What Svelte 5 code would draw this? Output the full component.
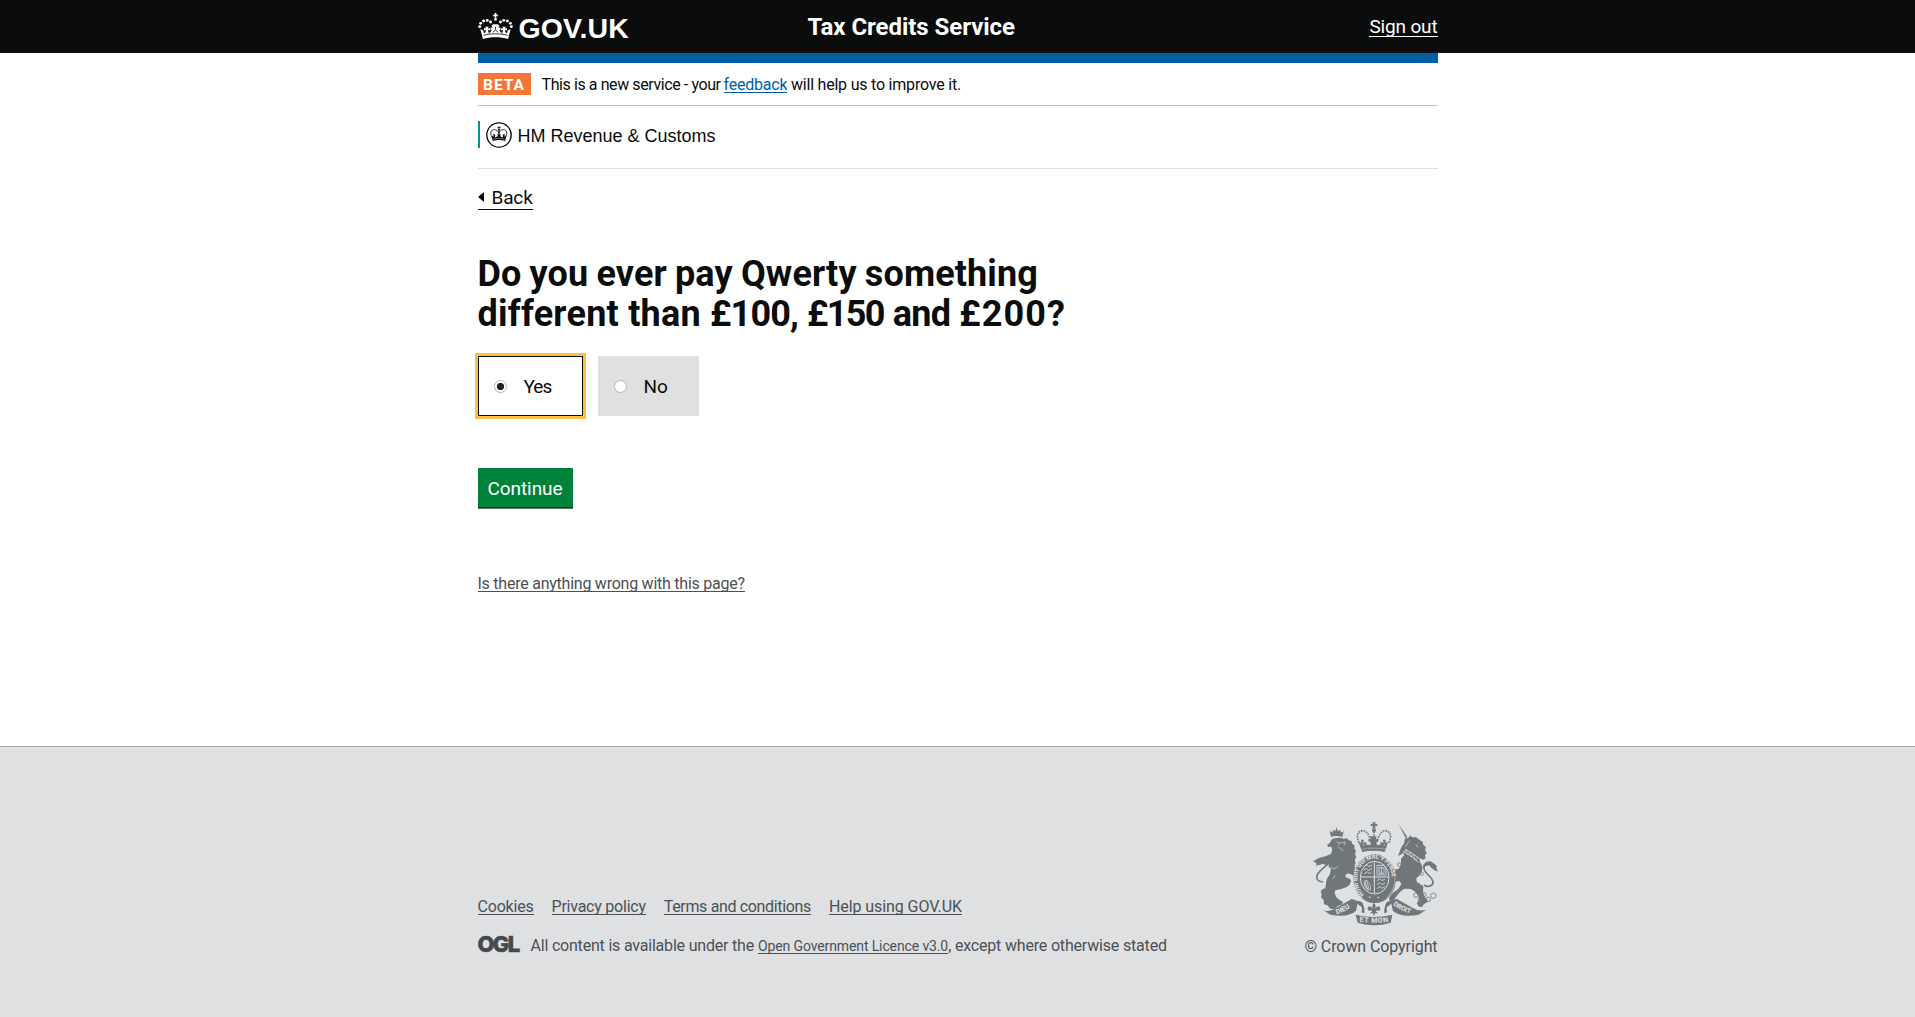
<script>
  let choice = $state('yes');
  const footerLinks = [
    { label: 'Cookies', cls: 'cookies' },
    { label: 'Privacy policy', cls: 'privacy' },
    { label: 'Terms and conditions', cls: 'terms' },
    { label: 'Help using GOV.UK', cls: 'help' }
  ];
  const sidePearls = [[29, 79], [32, 69], [41, 62], [52, 60], [62, 65]];
</script>

<header class="masthead">
  <div class="wrap masthead-row">
    <a class="logo" href="#home">
      <svg class="crown" viewBox="24 38 106 78" aria-hidden="true">
        <g fill="#fff">
          <path d="M74 38h6l-1 5 5-1v6l-5-1 1 5h-6l1-5-5 1v-6l5 1z" />
          <circle cx="77" cy="57" r="4.2" />
          {#each sidePearls as [x, y]}
            <circle cx={x} cy={y} r="4.4" />
            <circle cx={154 - x} cy={y} r="4.4" />
          {/each}
          <path d="M31 86l9 5 2 8 5-3 1-7-6 2v-8l6 2-2-6h10l-2 6 6-2v8l-6-2 2 8c5-1 8-4 10-9l-4 2v-9l6 3-3-8 5-4h14l5 4-3 8 6-3v9l-4-2c2 5 5 8 10 9l2-8-6 2v-8l6 2-2-6h10l-2 6 6-2v8l-6-2 1 7 5 3 2-8 9-5-8 30c-23-7-53-7-76 0z" />
        </g>
        <path d="M40 105c23-6 51-6 74 0M69 96l8-7 8 7M77 80v8M56 99l5-3M98 99l-5-3" fill="none" stroke="#0b0c0c" stroke-width="2.4" />
      </svg>
      <span>GOV.UK</span>
    </a>
    <span class="service">Tax Credits Service</span>
    <a class="signout" href="#signout">Sign out</a>
  </div>
</header>

<main class="wrap">
  <div class="phase">
    <strong>BETA</strong>
    <span class="phase-a">This is a new service - your</span>
    <a class="clip feedback" href="#feedback">feedback</a>
    <span class="phase-b">will help us to improve it.</span>
  </div>

  <div class="org">
    <div class="org-inner">
      <svg viewBox="48 65 79 79" aria-hidden="true">
        <circle cx="87.500" cy="104.500" r="37" fill="#fff" stroke="#0b0c0c" stroke-width="4" />
        <g fill="none" stroke="#0b0c0c" stroke-width="2.500">
          <path d="M68 115c-10-16-5-27 5-27 7 0 12 5 14 12 2-7 7-12 14-12 10 0 14 11 5 27M87.500 78v24M82 82h11" />
          <circle cx="87.500" cy="89" r="2.500" />
        </g>
        <path d="M66 106l5 4-1-9 6 3-1 8 9-4-2-6h11l-2 6 9 4-1-8 6-3-1 9 5-4-2 17c-12-4-27-4-39 0z" fill="#0b0c0c" />
        <path d="M70 117c11-3 24-3 35 0" fill="none" stroke="#bbb" stroke-width="1.500" />
      </svg>
      <span>HM Revenue &amp; Customs</span>
    </div>
  </div>

  <a class="back" href="#back"><i></i><span>Back</span></a>

  <h1>
    <span class="line line-a">Do you ever pay Qwerty something</span>
    <span class="line">
      <span class="seg-a">different than</span>
      <span class="seg-b">£100,</span>
      <span class="seg-c">£150</span>
      <span class="seg-d">and</span>
      <span class="seg-e">£200?</span>
    </span>
  </h1>

  <div class="options" role="radiogroup">
    <button class="option yes" class:selected={choice === 'yes'} role="radio" aria-checked={choice === 'yes'} onclick={() => (choice = 'yes')}>
      <i class="dot"></i><span>Yes</span>
    </button>
    <button class="option no" class:selected={choice === 'no'} role="radio" aria-checked={choice === 'no'} onclick={() => (choice = 'no')}>
      <i class="dot"></i><span>No</span>
    </button>
  </div>

  <button class="continue">Continue</button>

  <div class="report"><a class="clip" href="#report">Is there anything wrong with this page?</a></div>
</main>

<footer>
  <div class="wrap footer-row">
    <div class="meta">
      <nav>
        {#each footerLinks as link}
          <a class="clip {link.cls}" href="#{link.cls}">{link.label}</a>
        {/each}
      </nav>
      <div class="licence">
        <svg class="ogl" viewBox="0 0 43 18" aria-hidden="true">
          <text x="-0.500" y="16.500">OGL</text>
        </svg>
        <span class="lic-a">All content is available under the</span>
        <a class="clip lic-link" href="#licence">Open Government Licence v3.0</a>
        <span class="lic-b">, except where otherwise stated</span>
      </div>
    </div>
    <div class="copyright">
      <svg viewBox="69 35 375 312" aria-hidden="true">
        <defs>
          <path id="motto" d="M222 252A52 60 0 1 1 286 252" />
          <path id="dieu" d="M140 312Q165 304 192 284" />
          <path id="mon" d="M208 333Q252 342 301 333" />
          <path id="droit" d="M309 284Q335 304 374 313" />
        </defs>
        <g fill="#6f777b">
          <!-- central crown -->
          <path d="M247 36h10l-2 6 7-2v8l-7-2 2 8h-10l2-8-7 2v-8l7 2z" />
          <circle cx="252" cy="60" r="6" />
          <path d="M209 105l-3-10 8 3-1-10h8l-1 10 8-4 2 9 12 0-1-11-6 2v-8l8 1-3-9h20l-3 9 8-1v8l-6-2-1 11h12l2-9 8 4-1-10h8l-1 10 8-3-3 10-7 20q-34-8-67 0z" />
          <!-- lion -->
          <path d="M123 79l-4-17 9 5 1-9 7 5 3-12 5 12 7-5 2 9 8-4-4 17q-18-5-34-1z" />
          <path d="M121 96q2-10 13-12l16-2 12 3 9-1 5 6 9 2 1 8 8 5-1 9 5 8-3 9 4 9-5 8 3 9-3 8 1 12q8 6 10 15-2 10-10 10l-9-9-11-4-9 4 2 9q13 0 15 10-2 12-13 18l-16 6-18 4-2 8 5 13 11 9 9 5-3 7-13 5-9 9-13-1-9-10-10-3-1-13-8-8 2-8-3-10q5-9 14-9l3-22q2-10 10-19l4-17-7-6 0-11-9 5-10-4-9 5-5-9 9-5 3-9q16-6 28-11l4-12-3-10-9 1-4-6 7-5z" />
          <path d="M69 154q9-8 17-10 9-6 21-4l-3 5-7 3q-2 14-19 18 5-10-9-12z" />
          <!-- unicorn -->
          <path d="M326 42l26 38-5 4z" />
          <path d="M333 113l10-16 1-12 12-3 5-7 5 6 13 0 10 8 9 5 2 10 8 7-3 8 5 9-5 7 2 9-7 4-12-4 3 13 7 12-3 16-7 11-9 8 1 10 20 14-1 18 6 16 8 6-2 8-9 5-6 9-9-1-7-10 8-10-3-13-11-13-12-7-19-1-11 8-12 14-9 14-11 5-3-12 8-14 20-14 9-15-5-9-17 3-10 13-9-3 4-8-8-5 5-9 18-7-11-11-15-4-2 9-10-9 8-12 11 0 15 9 17-1 8-13 0-18 9-11-1-7-17 9z" />
          <path d="M399 167q4-15 23-14l18 13-1 8 5 10q-13-4-20-12l-6-7-9 2z" />
          <!-- garter -->
          <ellipse cx="254" cy="205" rx="64" ry="73" />
        </g>
        <path d="M196 274q-4 18 7 24l-7 9 10 30h92l9-30-7-9q11-8 7-24-25 8-53 4-30 4-58-4z" fill="#dee0e2" />
        <g fill="#6f777b">
          <!-- ribbons -->
          <path d="M99 298q17 10 40-6l46-26 19 6-6 30q-25 21-77 11l-8-5z" />
          <path d="M409 298q-19 7-42-6l-46-26-19 6 7 30q25 21 77 11l8-5z" />
        </g>
        <g fill="none" stroke="#6f777b" stroke-width="5">
          <path d="M247 105q-12-45-29-44-24 4-11 37M257 105q12-45 29-44 24 4 11 37" stroke-dasharray="5 3" />
          <path d="M252 65v37" stroke-dasharray="4 3" />
          <path d="M108 143q20 3 2 22-23 17-29 30-5 18 18 20M404 164q-7 13 8 27 28 26 10 35-10 5-20-2" />
        </g>
        <g fill="none" stroke="#dee0e2">
          <ellipse cx="254" cy="205" rx="61" ry="70" stroke-width="1.500" />
          <ellipse cx="254" cy="202" rx="43" ry="49" stroke-width="3" />
          <path d="M253 156v92M213 200h83" stroke-width="3" />
          <path d="M140 94l9 4-5 7M151 98l15-3-4 9M145 110q11 5 13 12M121 170q12 10 23-2M127 205l10-9" stroke-width="2" />
          <path d="M359 91l-13 18M377 102l7 9" stroke-width="2" />
          <path d="M340 123q24 13 46 33M345 117q24 12 45 29" stroke-width="2.500" />
          <path d="M340 128l9-11 3 16 9-8 2 15 9-6 2 15 9-5" stroke-width="2" />
          <path d="M209 118q43-9 86 0" stroke-width="2" stroke-dasharray="5 3" />
          <path d="M232 103l5-7 5 7M262 103l5-7 5 7M223 107l-4-6M281 107l4-6" stroke-width="2" />
          <path d="M222 169l10-6 5 6 9-5M221 179l8-4 6 5 11-6M223 190l9-6 6 6 7-5M261 211l9-6 6 6 9-5M261 223l9-6 6 6 9-5M261 235l9-6 6 5 8-5" stroke-width="2.500" />
          <path d="M261 165h21l6 10v19h-27zM267 171v18h15v-16zM274 170v21" stroke-width="2.500" />
          <path d="M224 211q19 0 18 29M224 211l10 27M230 209l8 32M222 216l10 21M224 211q-5 17 12 29" stroke-width="2" />
        </g>
        <g fill="#6f777b">
          <path d="M213 251q41 34 83 0l-9 17q-34 19-65 0z" />
          <path d="M196 274q14-6 22 4 7 19 5 31l-9-3q6-18-5-20zM310 274q-14-6-22 4-7 19-5 31l9-3q-6-18 5-20z" />
          <path d="M252 277q8 9 3 20 8-15 16-5 1 12-11 8l-3 5h5v4h-7l-3 9-3-9h-7v-4h5l-3-5q-12 4-11-8 8-10 16 5-5-11 3-20z" />
          <path d="M197 313q55 14 110 0l-5 24q-49 15-99 0z" />
        </g>
        <g fill="#dee0e2">
          <circle cx="239" cy="261" r="2.500" /><circle cx="265" cy="261" r="2.500" />
        </g>
        <g fill="none" stroke="#6f777b" stroke-width="2.500">
          <circle cx="378" cy="254" r="7" /><circle cx="390" cy="268" r="6" /><circle cx="414" cy="267" r="7" /><circle cx="430" cy="256" r="8" />
          <circle cx="402" cy="253" r="6" /><circle cx="328" cy="163" r="5" /><circle cx="326" cy="184" r="7" /><circle cx="395" cy="190" r="5" />
        </g>
        <g class="mottoes">
          <text font-size="17"><textPath href="#motto">HONI SOIT QUI MAL Y PENSE</textPath></text>
          <text font-size="21"><textPath href="#dieu">DIEU</textPath></text>
          <text font-size="21" letter-spacing="2"><textPath href="#mon">ET MON</textPath></text>
          <text font-size="20"><textPath href="#droit">DROIT</textPath></text>
        </g>
      </svg>
      <span>© Crown Copyright</span>
    </div>
  </div>
</footer>

<style>
  :global(body) { background: #fff; color: #0b0c0c; }
  :global(#app) { display: flex; flex-direction: column; min-height: 100vh; font: 16px/21px Roboto, sans-serif; }
  a { color: inherit; text-decoration: none; }
  button { font: inherit; border: 0; border-radius: 0; padding: 0; color: inherit; cursor: pointer; }
  .wrap { width: 960px; margin: 0 auto; box-sizing: border-box; }
  .clip { display: block; height: 18px; overflow: hidden; border-bottom: 1px solid currentColor; white-space: nowrap; }

  .masthead { height: 53px; background: #0b0c0c; color: #fff; }
  .masthead-row { display: flex; align-items: flex-start; }
  .logo { display: flex; width: 330px; height: 53px; font: bold 28.5px/32px "Liberation Sans", sans-serif; letter-spacing: 0.1px; }
  .logo span { margin: 12px 0 0 6px; }
  .crown { width: 35px; height: 26px; margin-top: 13px; }
  .service { flex: 1; margin-top: 12px; font-size: 24px; font-weight: bold; line-height: 30px; letter-spacing: -0.05px; }
  .signout { display: block; margin-top: 13px; height: 23px; font-size: 19px; line-height: 27px; letter-spacing: -0.16px; border-bottom: 1px solid #fff; }

  main { border-top: 10px solid #005ea5; }
  .phase { display: flex; align-items: flex-start; height: 43px; padding-top: 11px; box-sizing: border-box; border-bottom: 1px solid #bfc1c3; white-space: nowrap; }
  .phase strong { width: 53px; height: 22px; margin: -1px 11px 0 0; background: #f47738; color: #fff; font-size: 15.5px; line-height: 24px; letter-spacing: 1px; text-align: center; }
  .phase-a { width: 182px; letter-spacing: -0.41px; }
  .feedback { color: #005ea5; letter-spacing: -0.2px; }
  .phase-b { margin-left: 3.5px; letter-spacing: -0.21px; }

  .org { padding: 15px 0 20px; border-bottom: 1px solid #dee0e2; }
  .org-inner { display: flex; align-items: center; height: 27px; border-left: 2px solid #009390; }
  .org svg { width: 26px; height: 26px; margin: 0 6px; }
  .org span { font: 18px/27px "Liberation Sans", sans-serif; letter-spacing: -0.01px; padding-top: 3px; }

  .back { display: flex; align-items: flex-start; width: 55px; height: 25px; margin-top: 15px; border-bottom: 1px solid #0b0c0c; font-size: 19px; line-height: 27px; letter-spacing: -0.15px; }
  .back i { width: 0; height: 0; margin: 8px 8px 0 0; border: 5px solid transparent; border-left: 0; border-right: 6px solid #0b0c0c; }

  h1 { margin: 44px 0 0; font-size: 36px; line-height: 40px; }
  .line { display: block; white-space: nowrap; }
  .line-a { letter-spacing: 0.12px; word-spacing: -0.9px; }
  .seg-a { letter-spacing: 0.25px; }
  .seg-b { letter-spacing: -0.8px; }
  .seg-c { letter-spacing: -1.7px; }
  .seg-d { letter-spacing: -0.7px; }
  .seg-e { letter-spacing: 1.1px; }

  .options { display: flex; gap: 15px; margin-top: 22px; }
  .option { display: flex; align-items: center; height: 60px; background: #dee0e2; font-size: 19px; }
  .option span { padding-top: 1px; }
  .yes { width: 105px; padding-left: 16px; letter-spacing: -1px; }
  .no { width: 101px; padding-left: 16px; letter-spacing: 0; }
  .selected { background: #fff; box-shadow: inset 0 0 0 1px #0b0c0c; outline: 3px solid #ffbf47; }
  .dot { display: block; box-sizing: border-box; width: 13px; height: 13px; margin-right: 17px; border: 1px solid #b5b5b5; border-radius: 50%; background: #fff; }
  .selected .dot { background: radial-gradient(circle, #222 3.3px, #fff 4px); }

  .continue { display: block; width: 95px; height: 39px; margin-top: 52px; background: #00823b; color: #fff; font-size: 19px; line-height: 22px; padding-top: 2px; letter-spacing: -0.07px; box-shadow: 0 1px 0 #003618, 0 2px 0 #59806b; }
  .report { display: flex; margin-top: 66px; height: 173px; color: #4c5054; letter-spacing: -0.24px; }

  footer { flex: 1; border-top: 1px solid #a1acb2; background: #dee0e2; color: #4c5054; }
  .footer-row { display: flex; justify-content: space-between; padding-top: 75px; }
  .meta { padding-top: 74px; }
  nav { display: flex; gap: 18px; }
  .cookies { letter-spacing: -0.2px; }
  .privacy { letter-spacing: -0.23px; }
  .terms { letter-spacing: -0.35px; }
  .help { letter-spacing: -0.07px; }
  .licence { display: flex; margin-top: 20px; white-space: nowrap; }
  .ogl { width: 43px; height: 18px; margin-right: 10px; overflow: visible; }
  .ogl text { font: 800 22px Inter, sans-serif; letter-spacing: -1.7px; fill: #45494c; stroke: #45494c; stroke-width: 0.6; }
  .lic-a { width: 227.5px; letter-spacing: -0.2px; }
  .lic-link { font-size: 14px; letter-spacing: -0.12px; line-height: 22px; }
  .lic-b { letter-spacing: -0.18px; }
  .copyright { display: flex; flex-direction: column; align-items: flex-end; letter-spacing: -0.09px; }
  .copyright svg { width: 125px; height: 104px; margin-bottom: 10px; }
  .mottoes { fill: #e5e7e8; font-family: Roboto, sans-serif; font-weight: bold; }
</style>
